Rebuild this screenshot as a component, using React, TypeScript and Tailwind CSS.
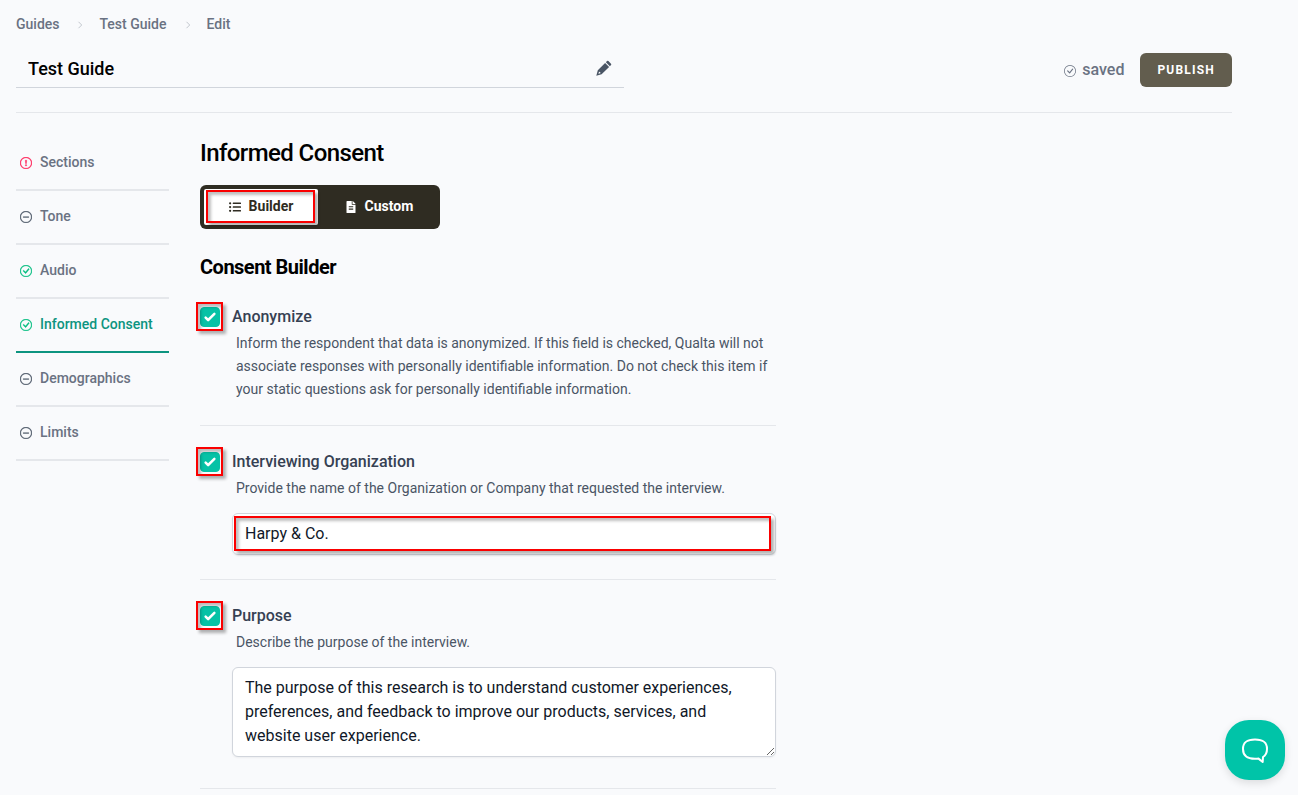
import { useId, useState, type ReactNode } from "react";
import {
  BsCheckCircle,
  BsDashCircle,
  BsExclamationCircle,
} from "react-icons/bs";
import { FaFileAlt, FaListUl } from "react-icons/fa";

type Status = "error" | "empty" | "done";

const steps: { label: string; status: Status; active?: boolean }[] = [
  { label: "Sections", status: "error" },
  { label: "Tone", status: "empty" },
  { label: "Audio", status: "done" },
  { label: "Informed Consent", status: "done", active: true },
  { label: "Demographics", status: "empty" },
  { label: "Limits", status: "empty" },
];

function StatusIcon({ status }: { status: Status }) {
  if (status === "error") return <BsExclamationCircle className="mt-0.5 size-3 text-rose-500" strokeWidth={0.5} />;
  if (status === "done") return <BsCheckCircle className="mt-0.5 size-3 text-emerald-500" strokeWidth={0.5} />;
  return <BsDashCircle className="mt-0.5 size-3 text-gray-600" strokeWidth={0.5} />;
}

function Highlight({ className }: { className: string }) {
  return (
    <span
      aria-hidden="true"
      className={`pointer-events-none absolute border-2 border-[#fa0000] shadow-[3px_3px_3px_rgba(0,0,0,0.3),inset_3px_3px_3px_rgba(0,0,0,0.25)] ${className}`}
    />
  );
}

function Crumb({ children, last }: { children: ReactNode; last?: boolean }) {
  return (
    <li className="flex items-center">
      <a href="#" className="hover:text-gray-700">{children}</a>
      {!last && (
        <svg viewBox="0 0 8 8" className="mx-4 mt-0.5 size-2" fill="none" stroke="#c3c7ce" aria-hidden="true">
          <path d="M3.5 .8 6.7 4 3.5 7.2" />
        </svg>
      )}
    </li>
  );
}

function ConsentItem({
  title,
  description,
  children,
}: {
  title: string;
  description: string;
  children?: (labelId: string) => ReactNode;
}) {
  const id = useId();
  const [checked, setChecked] = useState(true);
  return (
    <section className="flex gap-3 border-b border-gray-200 py-6">
      <div className="relative mt-0.5 size-5 shrink-0">
        <input
          id={id}
          type="checkbox"
          checked={checked}
          onChange={(e) => setChecked(e.target.checked)}
          className="peer block size-5 appearance-none rounded border border-gray-300 bg-white checked:border-[#06c2a6] checked:bg-[#06c2a6]"
        />
        <svg
          viewBox="0 0 16 16"
          fill="#fff"
          className="pointer-events-none absolute inset-0 hidden size-5 peer-checked:block"
          aria-hidden="true"
        >
          <path d="M12.207 4.793a1 1 0 010 1.414l-5 5a1 1 0 01-1.414 0l-2-2a1 1 0 011.414-1.414L6.5 9.086l4.293-4.293a1 1 0 011.414 0z" />
        </svg>
        <Highlight className="-top-[5px] -right-[3px] -bottom-1 -left-1" />
      </div>
      <div className="min-w-0 flex-1">
        <label id={`${id}-label`} htmlFor={id} className="block text-base leading-6 font-medium text-gray-700">
          {title}
        </label>
        <p className="mt-[3px] pl-1 text-sm leading-[23px] text-gray-600">{description}</p>
        {children?.(`${id}-label`)}
      </div>
    </section>
  );
}

export default function App() {
  const [mode, setMode] = useState("builder");
  return (
    <div className="min-h-screen bg-[#f9fafc] font-[Roboto,sans-serif] text-black">
      <div className="max-w-[1248px] px-4 pt-3.5">
        <nav aria-label="Breadcrumb">
          <ol className="flex text-sm leading-5 font-medium text-gray-500">
            <Crumb>Guides</Crumb>
            <Crumb>Test Guide</Crumb>
            <Crumb last>Edit</Crumb>
          </ol>
        </nav>

        <header className="mt-4 flex items-start justify-between border-b border-gray-200 pb-6">
          <div className="flex w-1/2 items-center border-b border-gray-300 pr-3">
            <input
              aria-label="Guide title"
              defaultValue="Test Guide"
              className="h-[37px] min-w-0 flex-1 bg-transparent px-3 text-lg leading-7 font-medium outline-none"
            />
            <button type="button" aria-label="Edit title" className="pb-0.5 text-gray-600">
              <svg viewBox="0 0 16 16" fill="currentColor" className="size-4" aria-hidden="true">
                <path d="M9.9 2.2 11 1.1Q11.7.4 12.4 1.1L15 3.7Q15.7 4.4 15 5.1L13.9 6.2Z" />
                <path
                  fillRule="evenodd"
                  d="M9.1 3 13.1 7 5.6 14.3.3 15.8 1.8 10.3ZM3 11.7 2.4 13.8 4.4 13.2 4.2 12.1Z"
                />
              </svg>
            </button>
          </div>
          <div className="flex items-center gap-4 pt-[3px]">
            <span className="flex items-center gap-1.5 text-base leading-6 font-medium text-gray-500">
              <BsCheckCircle className="mt-0.5 size-3" />
              saved
            </span>
            <button
              type="button"
              className="rounded-md bg-[#625d4e] px-[17px] py-[9px] text-xs leading-4 font-bold tracking-widest text-white uppercase"
            >
              Publish
            </button>
          </div>
        </header>

        <div className="flex gap-[31px] pt-6">
          <nav aria-label="Guide steps" className="w-[153px] shrink-0">
            <ul>
              {steps.map((s) => (
                <li key={s.label}>
                  <a
                    href="#"
                    aria-current={s.active ? "page" : undefined}
                    className={`flex items-center gap-2 border-b-2 px-1 pt-[15px] pb-[17px] text-sm leading-5 font-medium ${
                      s.active ? "border-[#0d9480] text-[#0d9480]" : "border-gray-200 text-gray-500"
                    }`}
                  >
                    <StatusIcon status={s.status} />
                    {s.label}
                  </a>
                </li>
              ))}
            </ul>
          </nav>

          <main className="max-w-xl min-w-0 flex-1">
            <h1 className="text-2xl leading-8 font-medium tracking-tight">Informed Consent</h1>

            <div className="mt-4 flex w-60 rounded-md bg-[#2f2c22] p-1 text-sm leading-5 font-bold">
              <button
                type="button"
                aria-pressed={mode === "builder"}
                onClick={() => setMode("builder")}
                className="relative flex h-9 w-[114px] items-center justify-center gap-2 rounded-xs bg-white pb-0.5 text-[#2f2c22]"
              >
                <FaListUl className="mt-0.5 size-3" />
                Builder
                <Highlight className="top-px right-[3px] bottom-0.5 left-0.5" />
              </button>
              <button
                type="button"
                aria-pressed={mode === "custom"}
                onClick={() => setMode("custom")}
                className="flex h-9 flex-1 items-center justify-center gap-2 pb-0.5 pl-1 text-white"
              >
                <FaFileAlt className="mt-0.5 size-3" />
                Custom
              </button>
            </div>

            <h2 className="mt-6 text-xl leading-7 font-bold tracking-tight">Consent Builder</h2>

            <ConsentItem
              title="Anonymize"
              description="Inform the respondent that data is anonymized. If this field is checked, Qualta will not associate responses with personally identifiable information. Do not check this item if your static questions ask for personally identifiable information."
            />
            <ConsentItem
              title="Interviewing Organization"
              description="Provide the name of the Organization or Company that requested the interview."
            >
              {(labelId) => (
                <div className="relative mt-[13px]">
                  <input
                    aria-labelledby={labelId}
                    defaultValue="Harpy & Co."
                    className="block w-full rounded-md border border-gray-300 bg-white px-3 py-2 text-base leading-6 text-gray-900 shadow-xs outline-none"
                  />
                  <Highlight className="top-[3px] right-[5px] bottom-1 left-0.5" />
                </div>
              )}
            </ConsentItem>
            <ConsentItem title="Purpose" description="Describe the purpose of the interview.">
              {(labelId) => (
                <textarea
                  aria-labelledby={labelId}
                  rows={3}
                  defaultValue="The purpose of this research is to understand customer experiences, preferences, and feedback to improve our products, services, and website user experience."
                  className="mt-[13px] mb-[7px] block w-full rounded-md border border-gray-300 bg-white px-3 py-2 text-base leading-6 text-gray-900 shadow-xs outline-none"
                />
              )}
            </ConsentItem>
          </main>
        </div>
      </div>

      <button
        type="button"
        aria-label="Open chat"
        className="fixed right-[13px] bottom-[15px] flex size-[60px] items-center justify-center rounded-3xl bg-[#00c4a8] shadow-[0_3px_8px_rgba(0,0,0,0.12)]"
      >
        <svg viewBox="0 0 28 28" className="size-7" fill="none" stroke="#fff" strokeWidth="2" strokeLinejoin="round" aria-hidden="true">
          <path d="M14 3.5C20.5 3.5 26 5 26 13C26 17 24.5 19.5 22 21L21.7 26L17.5 22.6C16.5 22.8 15.2 22.8 14 22.8C7.5 22.8 2 21 2 13C2 5 7.5 3.5 14 3.5Z" />
        </svg>
      </button>
    </div>
  );
}
